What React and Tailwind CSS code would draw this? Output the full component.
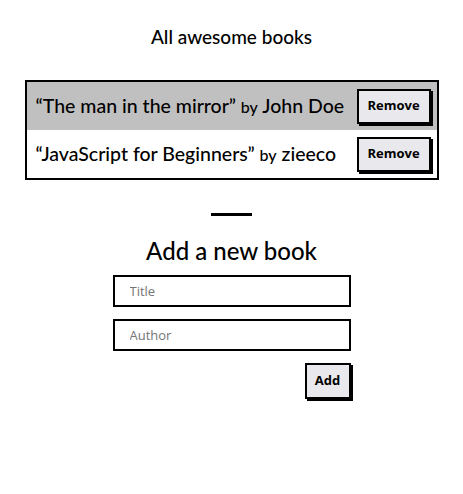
import { useState } from 'react';

const initialBooks = [
  { id: 1, title: 'The man in the mirror', author: 'John Doe' },
  { id: 2, title: 'JavaScript for Beginners', author: 'zieeco' },
];

export default function App() {
  const [books, setBooks] = useState(initialBooks);
  const [title, setTitle] = useState('');
  const [author, setAuthor] = useState('');

  const removeBook = (id) => {
    setBooks(books.filter((book) => book.id !== id));
  };

  const addBook = (e) => {
    e.preventDefault();
    if (!title || !author) return;
    setBooks([...books, { id: Date.now(), title, author }]);
    setTitle('');
    setAuthor('');
  };

  return (
    <div className="min-h-[494px] bg-white text-black font-['Lato',_'Noto_Sans',_sans-serif]">
      <h1 className="pt-[25px] text-center text-[19px] leading-[24px] font-medium">All awesome books</h1>

      <ul className="mx-auto mt-[31px] w-[414px] border-2 border-black">
        {books.map((book, i) => (
          <li
            key={book.id}
            className={`flex h-[48px] items-center justify-between pl-[9px] pr-[6px] ${i % 2 === 0 ? 'bg-[#c0c0c0]' : 'bg-white'}`}
          >
            <p className="text-[19.5px] font-medium leading-none whitespace-nowrap">
              “{book.title}” <span className="text-[16px]">by</span> {book.author}
            </p>
            <button
              type="button"
              onClick={() => removeBook(book.id)}
              className="h-[35px] w-[74px] border-2 border-black bg-[#e9e9ed] text-[13px] font-bold font-['Open_Sans',_sans-serif] shadow-[2px_2px_0_#000]"
            >
              Remove
            </button>
          </li>
        ))}
      </ul>

      <hr className="mx-auto mt-[33px] w-[41px] border-t-[3px] border-black" />

      <h2 className="mt-[20px] text-center text-[24px] leading-[30px] font-medium">Add a new book</h2>

      <form onSubmit={addBook} className="mx-auto mt-[9px] flex w-[238px] flex-col gap-[12px]">
        <input
          type="text"
          placeholder="Title"
          value={title}
          onChange={(e) => setTitle(e.target.value)}
          className="h-[32px] border-2 border-black px-[15px] text-[13px] font-['Open_Sans',_sans-serif] placeholder:text-[#757575] outline-none"
        />
        <input
          type="text"
          placeholder="Author"
          value={author}
          onChange={(e) => setAuthor(e.target.value)}
          className="h-[32px] border-2 border-black px-[15px] text-[13px] font-['Open_Sans',_sans-serif] placeholder:text-[#757575] outline-none"
        />
        <button
          type="submit"
          className="self-end h-[36px] w-[46px] border-2 border-black bg-[#e9e9ed] text-[13px] font-bold font-['Open_Sans',_sans-serif] shadow-[2px_2px_0_#000]"
        >
          Add
        </button>
      </form>
    </div>
  );
}
